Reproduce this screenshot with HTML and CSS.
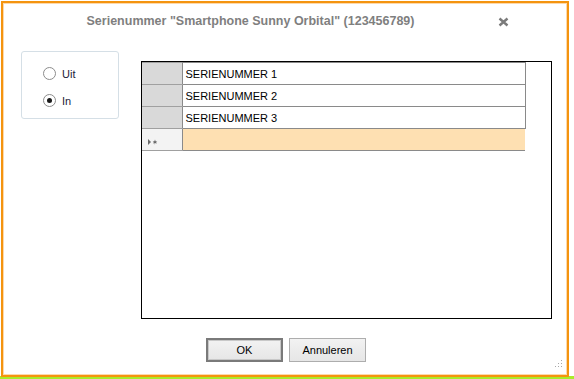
FILE: index.html
```html
<!DOCTYPE html>
<html lang="nl">
<head>
    <meta charset="UTF-8">
    <title>Serienummer</title>
    <link rel="stylesheet" href="styles.css">
</head>
<body>
    <div class="dialog">
        <div class="titlebar">
            <div class="title">Serienummer "Smartphone Sunny Orbital" (123456789)</div>
            <div class="close">
                <svg width="11" height="10" viewBox="0 0 11 10">
                    <path d="M1.5 1.5 L9.5 8.5 M9.5 1.5 L1.5 8.5" stroke="#7b7b7b" stroke-width="2.4" fill="none"/>
                </svg>
            </div>
        </div>

        <div class="main">
            <div class="groupbox">
                <label class="radio"><span class="circle"></span>Uit</label>
                <label class="radio"><span class="circle checked"></span>In</label>
            </div>

            <div class="grid">
                <table>
                    <tr><td class="rowhead"></td><td class="cell">SERIENUMMER 1</td></tr>
                    <tr><td class="rowhead"></td><td class="cell">SERIENUMMER 2</td></tr>
                    <tr><td class="rowhead"></td><td class="cell">SERIENUMMER 3</td></tr>
                    <tr class="newrow">
                        <td class="rowhead">
                            <svg width="10" height="6" viewBox="0 0 10 6" fill="#6a6a6a">
                                <path d="M0 0 L3 3 L0 6 Z"/>
                                <path d="M7 0.5 L7.6 2.2 L9.3 2 L8 3.1 L9 4.6 L7.3 4 L6.9 5.7 L6.5 4 L4.9 4.6 L5.9 3.1 L4.7 2 L6.4 2.2 Z"/>
                            </svg>
                        </td>
                        <td class="cell"></td>
                    </tr>
                </table>
            </div>
        </div>

        <div class="buttons">
            <button class="btn default">OK</button>
            <button class="btn">Annuleren</button>
        </div>

        <div class="grip">
            <svg width="9" height="9" viewBox="0 0 9 9" fill="#a8a8a8">
                <rect x="7" y="1" width="1" height="1"/>
                <rect x="4" y="4" width="1" height="1"/>
                <rect x="7" y="4" width="1" height="1"/>
                <rect x="1" y="7" width="1" height="1"/>
                <rect x="4" y="7" width="1" height="1"/>
                <rect x="7" y="7" width="1" height="1"/>
            </svg>
        </div>
    </div>
</body>
</html>
```

FILE: styles.css
```css
html, body {
    margin: 0;
    padding: 0;
}

body {
    width: 574px;
    height: 379px;
    overflow: hidden;
    background: linear-gradient(to bottom, #ffffff 376px, #a9ec2a 376px);
    font-family: "Liberation Sans", Arial, sans-serif;
}

.dialog {
    position: relative;
    margin: 1px 0 0 1px;
    width: 568px;
    height: 376px;
    box-sizing: border-box;
    border: 2px solid #f4940f;
    box-shadow: inset 0 0 0 1px #fdd9ab;
    background: #fff;
    display: flex;
    flex-direction: column;
}

.titlebar {
    display: flex;
    align-items: center;
    height: 34px;
}

.title {
    width: 495px;
    text-align: center;
    font-weight: bold;
    font-size: 12.5px;
    color: #7f7f7f;
    padding-top: 1px;
}

.close {
    margin-left: 0;
    padding-top: 3px;
    display: flex;
}

.main {
    display: flex;
    align-items: flex-start;
    padding-left: 18px;
    gap: 22px;
}

.groupbox {
    margin-top: 14px;
    width: 98px;
    height: 68px;
    box-sizing: border-box;
    border: 1px solid #d5dfe6;
    border-radius: 3px;
    padding: 15px 0 0 21px;
    display: flex;
    flex-direction: column;
    gap: 14px;
}

.radio {
    display: flex;
    align-items: center;
    gap: 6px;
    font-size: 11px;
    color: #1b1b38;
    height: 13px;
}

.circle {
    width: 11px;
    height: 11px;
    border: 1px solid #8c8c8c;
    border-radius: 50%;
    background: #fff;
    display: flex;
    align-items: center;
    justify-content: center;
}

.circle.checked::after {
    content: "";
    width: 5px;
    height: 5px;
    border-radius: 50%;
    background: #1a1a1a;
}

.grid {
    margin-top: 24px;
    width: 411px;
    height: 258px;
    box-sizing: border-box;
    border: 1px solid #000;
    background: #fff;
}

table {
    border-collapse: collapse;
    font-size: 11px;
}

td {
    height: 22px;
    padding: 0;
    border: 1px solid #8a8a8a;
    box-sizing: border-box;
}

.rowhead {
    width: 40px;
    background: #d9d9d9;
    border-left: none;
    border-color: #a0a0a0 #8a8a8a;
}

.cell {
    width: 343px;
    padding-left: 3px;
    color: #000;
    background: #fff;
}

.newrow .rowhead {
    background: #f3f3f3;
    padding-left: 6px;
    padding-top: 2px;
}

.newrow .cell {
    background: #fee0b2;
    border-right: none;
}

.buttons {
    display: flex;
    justify-content: center;
    gap: 6px;
    margin-top: 19px;
    padding-left: 2px;
}

.btn {
    width: 77px;
    height: 24px;
    box-sizing: border-box;
    border: 1px solid #adadad;
    background: linear-gradient(to bottom, #f2f2f2, #e6e6e6);
    font-family: "Liberation Sans", Arial, sans-serif;
    font-size: 11px;
    color: #000;
    padding: 0;
}

.btn.default {
    border: 2px solid #7a7a7a;
    box-shadow: inset 0 0 0 1px #c8c8c8;
}

.grip {
    position: absolute;
    right: 4px;
    bottom: 7px;
    display: flex;
}
```
